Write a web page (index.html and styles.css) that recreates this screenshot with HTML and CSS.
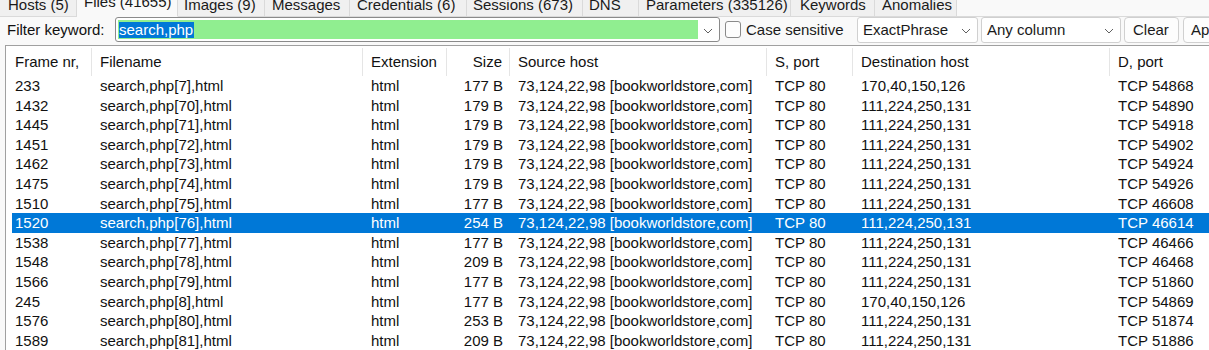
FILE: index.html
```html
<!DOCTYPE html>
<html>
<head>
<meta charset="utf-8">
<link rel="stylesheet" href="styles.css">
</head>
<body>
<div class="tabs">
  <div class="tab t-hosts">Hosts (5)</div>
  <div class="tab t-files active">Files (41655)</div>
  <div class="tab t-images">Images (9)</div>
  <div class="tab t-messages">Messages</div>
  <div class="tab t-cred">Credentials (6)</div>
  <div class="tab t-sess">Sessions (673)</div>
  <div class="tab t-dns">DNS</div>
  <div class="tab t-params">Parameters (335126)</div>
  <div class="tab t-keys">Keywords</div>
  <div class="tab t-anom">Anomalies</div>
  <div class="tab-rest"></div>
</div>
<div class="filter">
  <span class="label">Filter keyword:</span>
  <div class="combo keyword">
    <div class="green"><span class="sel">search,php</span></div>
    <svg class="chev" width="10" height="6" viewBox="0 0 10 6"><path d="M1 1 L5 5 L9 1" fill="none" stroke="#606060" stroke-width="1"/></svg>
  </div>
  <label class="check"><span class="box"></span>Case sensitive</label>
  <div class="combo plain phrase"><span>ExactPhrase</span>
    <svg class="chev" width="10" height="6" viewBox="0 0 10 6"><path d="M1 1 L5 5 L9 1" fill="none" stroke="#606060" stroke-width="1"/></svg>
  </div>
  <div class="combo plain column"><span>Any column</span>
    <svg class="chev" width="10" height="6" viewBox="0 0 10 6"><path d="M1 1 L5 5 L9 1" fill="none" stroke="#606060" stroke-width="1"/></svg>
  </div>
  <div class="btn clear">Clear</div>
  <div class="btn apply">Apply</div>
</div>
<div class="table">
  <div class="row head">
    <div class="c c1">Frame nr,</div>
    <div class="c">Filename</div>
    <div class="c">Extension</div>
    <div class="c r">Size</div>
    <div class="c">Source host</div>
    <div class="c">S, port</div>
    <div class="c">Destination host</div>
    <div class="c last">D, port</div>
  </div>
  <div class="body" id="body"></div>
</div>
<script>
const rows = [
  ["233","search,php[7],html","177 B","170,40,150,126","TCP 54868"],
  ["1432","search,php[70],html","179 B","111,224,250,131","TCP 54890"],
  ["1445","search,php[71],html","179 B","111,224,250,131","TCP 54918"],
  ["1451","search,php[72],html","179 B","111,224,250,131","TCP 54902"],
  ["1462","search,php[73],html","179 B","111,224,250,131","TCP 54924"],
  ["1475","search,php[74],html","179 B","111,224,250,131","TCP 54926"],
  ["1510","search,php[75],html","177 B","111,224,250,131","TCP 46608"],
  ["1520","search,php[76],html","254 B","111,224,250,131","TCP 46614"],
  ["1538","search,php[77],html","177 B","111,224,250,131","TCP 46466"],
  ["1548","search,php[78],html","209 B","111,224,250,131","TCP 46468"],
  ["1566","search,php[79],html","177 B","111,224,250,131","TCP 51860"],
  ["245","search,php[8],html","177 B","170,40,150,126","TCP 54869"],
  ["1576","search,php[80],html","253 B","111,224,250,131","TCP 51874"],
  ["1589","search,php[81],html","209 B","111,224,250,131","TCP 51886"]
];
const body = document.getElementById("body");
rows.forEach((r, i) => {
  const d = document.createElement("div");
  d.className = "row" + (i === 7 ? " selected" : "");
  d.innerHTML =
    '<div class="c c1">' + r[0] + '</div>' +
    '<div class="c">' + r[1] + '</div>' +
    '<div class="c">html</div>' +
    '<div class="c r">' + r[2] + '</div>' +
    '<div class="c">73,124,22,98 [bookworldstore,com]</div>' +
    '<div class="c">TCP 80</div>' +
    '<div class="c">' + r[3] + '</div>' +
    '<div class="c last">' + r[4] + '</div>';
  body.appendChild(d);
});
</script>
</body>
</html>
```

FILE: styles.css
```css
* { box-sizing: border-box; }
html, body { margin: 0; padding: 0; }
body {
  width: 1209px;
  height: 350px;
  overflow: hidden;
  background: #f9f9f9;
  font-family: "Liberation Sans", Arial, sans-serif;
  font-size: 15px;
  color: #111;
}
.tabs {
  display: flex;
  height: 17px;
  overflow: hidden;
}
.tab {
  flex-shrink: 0;
  height: 17px;
  line-height: 9px;
  padding-left: 7px;
  background: #f0f0f0;
  border-right: 1px solid #dadada;
  border-bottom: 1px solid #dadada;
  white-space: nowrap;
  overflow: hidden;
  color: #1a1a1a;
}
.t-hosts { width: 77px; padding-left: 8px; }
.t-files { width: 101px; }
.t-images { width: 87px; padding-left: 6px; }
.t-messages { width: 85px; padding-left: 7px; }
.t-cred { width: 117px; padding-left: 7px; }
.t-sess { width: 116px; padding-left: 6px; }
.t-dns { width: 56px; padding-left: 6px; }
.t-params { width: 152px; padding-left: 7px; }
.t-keys { width: 84px; padding-left: 9px; }
.t-anom { width: 82px; padding-left: 7px; }
.tab.active {
  background: #f9f9f9;
  border-bottom-color: transparent;
  line-height: 4px;
}
.tab-rest {
  flex: 1;
  height: 17px;
  border-bottom: 1px solid #dadada;
}
.filter {
  display: flex;
  align-items: center;
  height: 28px;
  padding-bottom: 3px;
  overflow: hidden;
}
.filter > * { flex-shrink: 0; }
.label {
  margin-left: 7px;
  width: 108px;
  white-space: nowrap;
}
.combo {
  position: relative;
  height: 25px;
  border-radius: 3px;
  display: flex;
  align-items: center;
}
.keyword {
  width: 605px;
  border: 1px solid #8a8a8a;
  background: #fff;
  padding: 2px;
}
.green {
  width: 580px;
  height: 19px;
  background: #90ee90;
  display: flex;
  align-items: center;
  padding-left: 1px;
}
.sel {
  background: #0078d7;
  color: #fff;
  line-height: 15px;
  height: 16px;
  padding-right: 1px;
}
.chev { position: absolute; right: 6px; top: 10px; }
.check {
  display: flex;
  align-items: center;
  margin-left: 5px;
  width: 127px;
  white-space: nowrap;
  color: #1a1a1a;
}
.box {
  width: 16px;
  height: 17px;
  border: 1px solid #8a8a8a;
  border-radius: 3px;
  background: #fdfdfd;
  margin-right: 5px;
}
.plain {
  border: 1px solid #d0d0d0;
  background: #fff;
  padding-left: 5px;
  color: #1a1a1a;
}
.phrase { margin-left: 5px; width: 121px; height: 26px; }
.column { margin-left: 3px; width: 140px; height: 26px; }
.btn {
  height: 26px;
  border: 1px solid #d0d0d0;
  border-radius: 4px;
  background: #fdfdfd;
  display: flex;
  align-items: center;
  padding-left: 8px;
  white-space: nowrap;
  color: #1a1a1a;
}
.clear { margin-left: 3px; width: 55px; }
.apply { margin-left: 4px; width: 60px; padding-left: 7px; }
.table {
  margin-left: 5px;
  border-left: 1px solid #a0a0a0;
  border-top: 1px solid #a0a0a0;
  background: #fff;
  height: 305px;
}
.row {
  display: grid;
  grid-template-columns: 80px 271px 84px 63px 257px 86px 257px 1fr;
  margin-left: 6px;
  height: 19.6px;
  line-height: 19.6px;
  white-space: nowrap;
}
.row.head {
  height: 30px;
  padding-top: 2px;
}
.head .c {
  border-right: 1px solid #e5e5e5;
  line-height: 28px;
}
.head .c.last { border-right: none; }
.c { padding-left: 8px; overflow: hidden; }
.c.c1 { padding-left: 3px; }
.c.r { text-align: right; padding-right: 7px; padding-left: 0; }
.row.selected { background: #0078d7; color: #fff; }
```
